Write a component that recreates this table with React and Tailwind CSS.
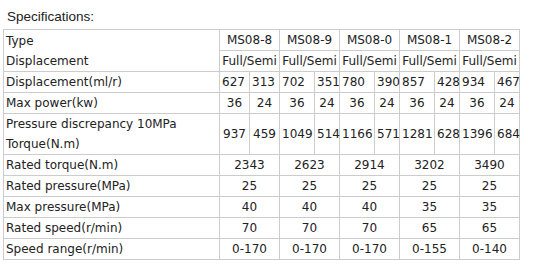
export default function App() {
  const models = ["MS08-8", "MS08-9", "MS08-0", "MS08-1", "MS08-2"];
  const disp = [
    ["627", "313"],
    ["702", "351"],
    ["780", "390"],
    ["857", "428"],
    ["934", "467"],
  ];
  const torque10 = [
    ["937", "459"],
    ["1049", "514"],
    ["1166", "571"],
    ["1281", "628"],
    ["1396", "684"],
  ];
  const merged = [
    ["Rated torque(N.m)", ["2343", "2623", "2914", "3202", "3490"]],
    ["Rated pressure(MPa)", ["25", "25", "25", "25", "25"]],
    ["Max pressure(MPa)", ["40", "40", "40", "35", "35"]],
    ["Rated speed(r/min)", ["70", "70", "70", "65", "65"]],
    ["Speed range(r/min)", ["0-170", "0-170", "0-170", "0-155", "0-140"]],
  ];

  const td = "border border-[#cccccc] px-[2px] py-0 h-[20px]";

  return (
    <div className="w-[535px] h-[266px] bg-white text-[#222] overflow-hidden">
      <p
        className="pl-[7px] pt-[8px] h-[29px] text-[13.5px] leading-[17px] text-[#222]"
        style={{ fontFamily: '"Liberation Sans", Arial, sans-serif' }}
      >
        Specifications:
      </p>

      <table
        className="ml-[3px] w-[517px] table-fixed border-collapse text-[12px] leading-[20px]"
        style={{ fontFamily: '"DejaVu Sans", Verdana, sans-serif' }}
      >
        <colgroup>
          <col className="w-[216px]" />
          <col className="w-[30px]" />
          <col className="w-[30px]" />
          <col className="w-[35px]" />
          <col className="w-[25px]" />
          <col className="w-[35px]" />
          <col className="w-[25px]" />
          <col className="w-[35px]" />
          <col className="w-[25px]" />
          <col className="w-[35px]" />
          <col className="w-[25px]" />
        </colgroup>
        <tbody>
          <tr>
            <td rowSpan={2} className={td + " text-left"}>
              Type
              <br />
              Displacement
            </td>
            {models.map((m) => (
              <td key={m} colSpan={2} className={td + " text-center"}>
                {m}
              </td>
            ))}
          </tr>
          <tr>
            {models.map((m) => (
              <td key={m} colSpan={2} className={td + " text-center whitespace-nowrap px-0"}>
                Full/Semi
              </td>
            ))}
          </tr>

          {/* displacement row, left aligned */}
          <tr>
            <td className={td}>Displacement(ml/r)</td>
            {disp.map((d, i) => [
              <td key={i + "a"} className={td + " text-left"}>{d[0]}</td>,
              <td key={i + "b"} className={td + " text-left"}>{d[1]}</td>,
            ])}
          </tr>

          <tr>
            <td className={td}>Max power(kw)</td>
            {models.map((m) => [
              <td key={m + "a"} className={td + " text-center"}>36</td>,
              <td key={m + "b"} className={td + " text-center"}>24</td>,
            ])}
          </tr>

          <tr>
            <td className={td}>
              Pressure discrepancy 10MPa
              <br />
              Torque(N.m)
            </td>
            {torque10.map((d, i) => [
              <td key={i + "a"} className={td + " text-center px-0"}>{d[0]}</td>,
              <td key={i + "b"} className={td + " text-center px-0"}>{d[1]}</td>,
            ])}
          </tr>

          {merged.map(([label, vals]) => (
            <tr key={label}>
              <td className={td}>{label}</td>
              {vals.map((v, i) => (
                <td key={i} colSpan={2} className={td + " text-center"}>
                  {v}
                </td>
              ))}
            </tr>
          ))}
        </tbody>
      </table>
    </div>
  );
}
